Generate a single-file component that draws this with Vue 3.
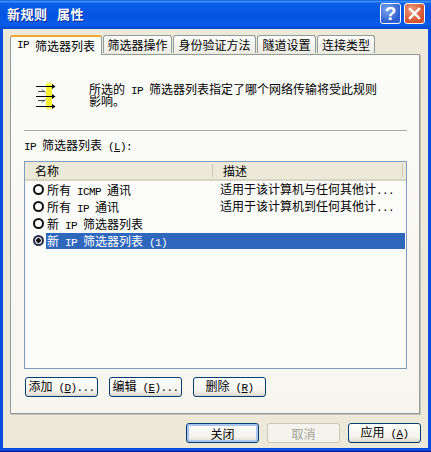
<script setup>
const tabs = [
  { parts: [['IP ', true], ['筛选器列表', false]], active: true },
  { parts: [['筛选器操作', false]] },
  { parts: [['身份验证方法', false]] },
  { parts: [['隧道设置', false]] },
  { parts: [['连接类型', false]] }
]
const rows = [
  { name: [['所有', false], [' ICMP ', true], ['通讯', false]], desc: '适用于该计算机与任何其他计' },
  { name: [['所有', false], [' IP ', true], ['通讯', false]], desc: '适用于该计算机到任何其他计' },
  { name: [['新', false], [' IP ', true], ['筛选器列表', false]], desc: '' },
  { name: [['新', false], [' IP ', true], ['筛选器列表', false], [' (1)', true]], desc: '', selected: true }
]
</script>

<template>
  <div class="window">
    <header class="titlebar">
      <div class="title">新规则 属性</div>
      <div class="caps">
        <div class="cap help">?</div>
        <div class="cap close">
          <svg width="13" height="13" viewBox="0 0 13 13">
            <path d="M2 2 L11 11 M11 2 L2 11" stroke="#fff" stroke-width="2.4" stroke-linecap="square" />
          </svg>
        </div>
      </div>
    </header>

    <div class="client">
      <nav class="tabs">
        <div v-for="(t, i) in tabs" :key="i" class="tab" :class="['t' + i, { active: t.active }]">
          <span v-for="(p, j) in t.parts" :key="j" :class="{ l: p[1] }">{{ p[0] }}</span>
        </div>
      </nav>

      <section class="sheet">
        <div class="intro">
          <svg class="rule-icon" width="22" height="30" viewBox="0 0 22 30">
            <defs>
              <linearGradient id="bar" x1="0" y1="0" x2="0" y2="1">
                <stop offset="0" stop-color="#fffbc8" />
                <stop offset="0.12" stop-color="#f8f030" />
                <stop offset="0.88" stop-color="#f8f030" />
                <stop offset="1" stop-color="#fffbc8" />
              </linearGradient>
            </defs>
            <rect x="10" y="0" width="6" height="28" fill="url(#bar)" />
            <g stroke="#000" stroke-width="1" fill="none">
              <path d="M0 4.5H16M0 14.5H16M0 24.5H16" />
              <path d="M2 9.5H9M2 18.5H9" stroke="#444" />
              <path d="M6 7.5 L9 10.5 M6 20.5 L9 17.5" stroke="#444" />
            </g>
            <g fill="#000">
              <path d="M16 2 L19.5 4.5 L16 7Z" />
              <path d="M16 12 L19.5 14.5 L16 17Z" />
              <path d="M16 22 L19.5 24.5 L16 27Z" />
            </g>
          </svg>
          <p class="intro-text">
            <span class="line">所选的<span class="l"> IP </span>筛选器列表指定了哪个网络传输将受此规则</span>
            <span class="line">影响。</span>
          </p>
        </div>

        <hr class="sep" />

        <div class="label"><span class="l">IP </span>筛选器列表<span class="l"> (<u>L</u>):</span></div>

        <div class="list">
          <div class="head">
            <div class="col-name">名称</div>
            <div class="col-desc">描述</div>
          </div>
          <div v-for="(r, i) in rows" :key="i" class="row">
            <span class="radio" :class="{ on: r.selected }"></span>
            <div class="cell-name" :class="{ sel: r.selected }">
              <span v-for="(p, j) in r.name" :key="j" :class="{ l: p[1] }">{{ p[0] }}</span>
            </div>
            <div v-if="r.desc" class="cell-desc">{{ r.desc }}<span class="l dots">...</span></div>
          </div>
        </div>

        <div class="actions">
          <button class="btn">添加<span class="l"> (<u>D</u>)...</span></button>
          <button class="btn">编辑<span class="l"> (<u>E</u>)...</span></button>
          <button class="btn">删除<span class="l"> (<u>R</u>)</span></button>
        </div>
      </section>

      <footer class="footer">
        <button class="btn default">关闭</button>
        <button class="btn" disabled>取消</button>
        <button class="btn">应用<span class="l"> (<u>A</u>)</span></button>
      </footer>
    </div>
  </div>
</template>

<style scoped>
.window {
  width: 431px;
  height: 452px;
  box-sizing: border-box;
  display: flex;
  flex-direction: column;
  padding: 0 3px 3px;
  background: #0a4be0;
  border-bottom: 1px solid #00138c;
  font: 12px/13px "Noto Sans CJK SC", sans-serif;
  color: #000;
  overflow: hidden;
}
.l {
  font-family: "Liberation Mono", monospace;
  font-size: 11px;
  letter-spacing: -0.6px;
  white-space: pre;
}
.titlebar {
  height: 29px;
  margin: 0 -3px;
  padding: 0 6px 2px 7px;
  box-sizing: border-box;
  display: flex;
  align-items: center;
  justify-content: space-between;
  flex: none;
  background: linear-gradient(#0a58df 0, #3c90f5 5%, #0c5fe8 12%, #0553e2 50%, #0a5de8 85%, #0548d0 100%);
}
.title {
  color: #fff;
  font-weight: 700;
  font-size: 13px;
  letter-spacing: 0.5px;
  line-height: 16px;
  word-spacing: 6px;
  text-shadow: 1px 1px 0 #0a2a90;
}
.caps {
  display: flex;
  gap: 3px;
}
.cap {
  width: 21px;
  height: 21px;
  box-sizing: border-box;
  border: 1px solid #fff;
  border-radius: 3px;
  display: flex;
  align-items: center;
  justify-content: center;
}
.help {
  background: radial-gradient(circle at 35% 30%, #7fa8ee, #2a5ed2 70%);
  color: #fff;
  font: 700 19px/19px "Liberation Sans", sans-serif;
}
.close {
  background: radial-gradient(circle at 35% 30%, #ec9a7c, #d5512c 70%);
}
.client {
  flex: 1;
  min-height: 0;
  background: #ece9d8;
  display: flex;
  flex-direction: column;
  padding: 0 8px 0 7px;
}
.tabs {
  height: 25px;
  flex: none;
  display: flex;
  align-items: flex-end;
  position: relative;
  z-index: 1;
  gap: 1px;
}
.tab {
  height: 18px;
  box-sizing: border-box;
  border: 1px solid #919b9c;
  border-bottom: 0;
  border-radius: 3px 3px 0 0;
  background: linear-gradient(#fdfdfb, #ecebe4);
  display: flex;
  align-items: center;
  justify-content: center;
  white-space: pre;
  margin-bottom: 1px;
}
.t0 { width: 92px; }
.t1 { width: 69px; }
.t2 { width: 83px; }
.t3 { width: 59px; }
.t4 { width: 58px; }
.tab.active {
  height: 20px;
  margin-bottom: -1px;
  justify-content: flex-start;
  padding-left: 6px;
  padding-bottom: 2px;
  background: #fbfbf8;
  border-top: 2px solid #f0a830;
  border-left-color: #919b9c;
}
.sheet {
  width: 410px;
  height: 360px;
  box-sizing: border-box;
  flex: none;
  border: 1px solid #919b9c;
  box-shadow: 1px 1px 0 #c4c2b4;
  background: linear-gradient(#fbfbf9, #f6f5ee);
  padding: 0 12px 0 13px;
  display: flex;
  flex-direction: column;
}
.intro {
  height: 75px;
  flex: none;
  display: flex;
  padding: 26px 0 0 12px;
  box-sizing: border-box;
}
.rule-icon {
  flex: none;
  margin-top: 1px;
}
.intro-text {
  margin: 0 0 0 31px;
  padding-top: 1px;
}
.line {
  display: block;
  white-space: pre;
  height: 12px;
}
.sep {
  width: 383px;
  height: 0;
  margin: 0;
  border: 0;
  border-top: 1px solid #a9a89e;
  border-bottom: 1px solid #fff;
  flex: none;
}
.label {
  margin-top: 6px;
  height: 13px;
  white-space: pre;
  flex: none;
}
.list {
  width: 383px;
  height: 208px;
  box-sizing: border-box;
  margin-top: 10px;
  flex: none;
  border: 1px solid #7f9db9;
  background: #fbfbf9;
}
.head {
  height: 19px;
  display: flex;
  background: #ece9d8;
  border-bottom: 2px solid #d8d5c4;
  box-sizing: border-box;
  align-items: center;
}
.col-name {
  width: 188px;
  height: 13px;
  padding-left: 10px;
  box-sizing: border-box;
  border-right: 1px solid #c9c6b6;
}
.col-desc {
  width: 190px;
  height: 13px;
  padding-left: 10px;
  box-sizing: border-box;
  border-right: 1px solid #c9c6b6;
}
.row {
  height: 17px;
  display: flex;
  align-items: center;
  position: relative;
  white-space: pre;
}
.radio {
  width: 11px;
  height: 11px;
  box-sizing: border-box;
  border: 2px solid #111;
  border-radius: 50%;
  margin-left: 8px;
  flex: none;
  background: #fff;
  position: relative;
}
.radio.on {
  border-color: #26304a;
  background: radial-gradient(circle, #111 0 2px, #dfe4ef 2.5px);
}
.cell-name {
  margin-left: 2px;
  padding-left: 1px;
  width: 172px;
  height: 16px;
  line-height: 16px;
  flex: none;
}
.cell-name.sel {
  width: 358px;
  background: #2f67bd;
  color: #fff;
}
.cell-desc {
  margin-left: 1px;
}
.actions {
  display: flex;
  gap: 11px;
  margin-top: 8px;
  padding-left: 1px;
}
.btn {
  width: 73px;
  height: 20px;
  box-sizing: border-box;
  padding: 0;
  border: 1px solid #003c74;
  border-radius: 3px;
  background: linear-gradient(#fff, #f4f3ee 70%, #dcd9cc);
  font: 12px/13px "Noto Sans CJK SC", sans-serif;
  color: #000;
  white-space: pre;
}
.btn.default {
  box-shadow: inset 0 0 0 2px #a9c4ee;
}
.btn:disabled {
  border-color: #c9c7ba;
  background: #f4f3ee;
  color: #a1a192;
}
.footer {
  display: flex;
  justify-content: flex-end;
  gap: 8px;
  margin-top: 9px;
  margin-right: -1px;
}
</style>

<style>
html, body { margin: 0; padding: 0; background: #0a4be0; }
</style>
